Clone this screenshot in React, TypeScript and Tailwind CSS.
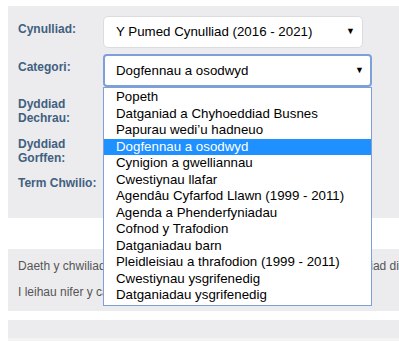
import { useState } from "react"

const options = [
  "Popeth",
  "Datganiad a Chyhoeddiad Busnes",
  "Papurau wedi\u2019u hadneuo",
  "Dogfennau a osodwyd",
  "Cynigion a gwelliannau",
  "Cwestiynau llafar",
  "Agendâu Cyfarfod Llawn (1999 - 2011)",
  "Agenda a Phenderfyniadau",
  "Cofnod y Trafodion",
  "Datganiadau barn",
  "Pleidleisiau a thrafodion (1999 - 2011)",
  "Cwestiynau ysgrifenedig",
  "Datganiadau ysgrifenedig",
]

function Label({ children }: { children: React.ReactNode }) {
  return (
    <div className="w-[85px] shrink-0 pt-[6px] text-[12px] leading-[14px] font-bold text-[#41607f]">
      {children}
    </div>
  )
}

export default function App() {
  const [selected] = useState(3)

  return (
    <div className="relative w-[399px] h-[341px] overflow-hidden bg-white font-['Liberation_Sans',Arial,sans-serif]">
      {/* Search form panel */}
      <div className="ml-2 mt-[6px] h-[212px] bg-[#ececee] pl-[10px] pt-[10px]">
        <div className="flex h-[32px]">
          <Label>Cynulliad:</Label>
          <div className="flex w-[260px] items-center justify-between rounded-[5px] border border-[#dcdcdc] bg-white pl-[12px] pr-[7px] text-[13.3px] text-black">
            <span>Y Pumed Cynulliad (2016 - 2021)</span>
            <span className="text-[9px]">▼</span>
          </div>
        </div>
        <div className="mt-[6px] flex h-[33px]">
          <Label>Categori:</Label>
          <div className="flex w-[269px] items-center justify-between rounded-[4px] border-2 border-[#7ea0d8] bg-white pl-[11px] pr-[6px] text-[13.3px] text-black">
            <span>Dogfennau a osodwyd</span>
            <span className="text-[9px]">▼</span>
          </div>
        </div>
        <div className="mt-[4px] flex h-[34px]">
          <Label>
            Dyddiad
            <br />
            Dechrau:
          </Label>
        </div>
        <div className="mt-[6px] flex h-[33px]">
          <Label>
            Dyddiad
            <br />
            Gorffen:
          </Label>
        </div>
        <div className="mt-[6px] flex h-[33px]">
          <Label>Term Chwilio:</Label>
        </div>
      </div>

      {/* Results info */}
      <div className="ml-2 mt-[31px] h-[62px] bg-[#ececee] pl-[10px] pt-[10px] text-[12px] leading-[14px] text-[#555]">
        <p className="whitespace-nowrap overflow-hidden tracking-[0.02px]">
          Daeth y chwiliad o hyd i 482 o ganlyniadau. Trefnir hwy yn ôl dyddiad diweddaraf.
        </p>
        <p className="mt-[12px] whitespace-nowrap overflow-hidden">
          I leihau nifer y canlyniadau, defnyddiwch yr hidlyddion uchod.
        </p>
      </div>

      <div className="ml-2 mt-[9px] h-[18px] bg-[#ececee]" />
      <div className="ml-2 h-[3px] bg-[#f3f3f4]" />

      {/* Open dropdown list */}
      <ul className="absolute left-[103px] top-[87px] w-[269px] border border-[#7f9fd6] bg-white py-px text-[13.3px] leading-[16.5px] text-black">
        {options.map((o, i) => (
          <li
            key={o}
            className={
              i === selected
                ? "h-[16.5px] pl-[12px] bg-[#1e90ff] text-white"
                : "h-[16.5px] pl-[12px]"
            }
          >
            {o}
          </li>
        ))}
      </ul>
    </div>
  )
}
